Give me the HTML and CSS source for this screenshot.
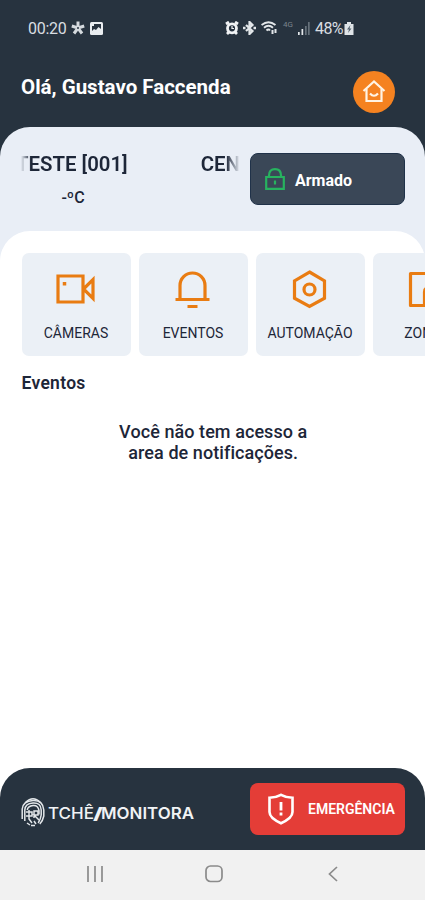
FILE: index.html
```html
<!doctype html>
<html lang="pt-BR">
<head>
  <title>Tchê Monitora</title>
  <meta charset="UTF-8">
  <meta name="viewport" content="width=device-width, initial-scale=1">
  <link rel="stylesheet" href="styles.css">
</head>
<body>
  <div class="statusbar">
    <div class="status-left">
      <span class="clock">00:20</span>
      <svg width="14" height="14" viewBox="0 0 14 14" stroke="#d5dade" stroke-width="3"><path d="M7 7V.5M7 7L.8 5M7 7l6.200-2M7 7l-4 5.500M7 7l4 5.500"/><circle cx="7" cy="7" r="1" fill="#27333f" stroke="none"/></svg>
      <svg width="13" height="13" viewBox="0 0 13 13"><rect width="13" height="13" rx="1.500" fill="#e9edf0"/><path d="M2 2h9v5L8.500 5 6 8 4 7 2 9z" fill="#27333f"/><path d="M2 2h2v2H2z" fill="#e9edf0"/></svg>
    </div>
    <div class="status-right">
      <svg class="alarm" width="14" height="14" viewBox="0 0 14 14" fill="none" stroke="#f1f3f5"><circle cx="7" cy="7.300" r="4.500" stroke-width="2.800"/><path d="M1 3l3-2M13 3l-3-2M2 13l2-2M12 13l-2-2" stroke-width="2.800"/><path d="M7 5v2.500h2" stroke-width="1.200"/></svg>
      <svg width="13" height="14" viewBox="0 0 13 14" fill="none" stroke="#e3e7ea" stroke-width="2.200"><path d="M3 4l6.500 6L6.500 13V1l3 3L3 10"/><path d="M0 7h2.500M10.500 7H13" stroke-width="2.400"/></svg>
      <svg width="17" height="14" viewBox="0 0 17 14" fill="none" stroke="#e3e7ea" stroke-width="1.900"><path d="M.5 4Q7.500-1.500 14.500 4M3 6.700q4.500-3.800 9 0M5.500 9.500Q7.500 7.500 9 9.500"/><path d="M11.500 9v4M14.500 8v4" stroke-width="2"/></svg>
      <span class="net">4G</span>
      <svg width="12" height="13" viewBox="0 0 12 13" fill="#e3e7ea"><path d="M0 10h1.700v3H0zM3.500 7h1.700v6H3.500z"/><path d="M7 4h1.700v9H7zM10 0h1.700v13H10z" fill="#66717b"/></svg>
      <span class="battery">48%</span>
      <svg class="battery-icon" width="10" height="13" viewBox="0 0 10 13"><path d="M3 0h4v2h2.500v11H.5V2H3z" fill="#dfe4e7"/><path d="M6.500 3L3 7.500h2L4 11l3.500-4.500h-2z" fill="#52606c"/></svg>
    </div>
  </div>

  <header class="header">
    <h1>Olá, Gustavo Faccenda</h1>
    <button class="home" aria-label="Início">
      <svg width="24" height="24" viewBox="0 0 24 24" fill="none" stroke="#fff3e4" stroke-width="2.200"><path d="M1.500 11L12 1.500 22.500 11"/><path d="M4.500 9v12h15V9"/><path d="M8 13.500q4 4.500 8 0"/></svg>
    </button>
  </header>

  <main class="site">
    <div class="site-bar">
      <div class="site-info">
        <div class="marquee"><span>TESTE [001]</span><span>CENTRAL</span></div>
        <div class="temp">-ºC</div>
      </div>
      <button class="armed">
        <svg width="20" height="22" viewBox="0 0 20 22" fill="none" stroke="#27b35f" stroke-width="2.200"><path d="M1.200 9h17.600v11.800H1.200z"/><path d="M4 9V7.500Q4 1.200 10 1.200t6 6.300V9"/><path d="M10 12.500v4"/></svg>
        <span>Armado</span>
      </button>
    </div>

    <div class="sheet">
      <nav class="cards">
        <a class="card">
          <svg width="40" height="40" viewBox="0 0 40 40"><path d="M2 7h25v26H2zM27.500 20L37 10.500v19z"/><path d="M8.500 13v3.500" stroke-width="3.500"/></svg>
          <span>CÂMERAS</span>
        </a>
        <a class="card">
          <svg width="40" height="40" viewBox="0 0 40 40"><path d="M7 30V16.500a12.500 12.500 0 0 1 25 0V30M2.500 30.500h34M14.500 37.500h10"/></svg>
          <span>EVENTOS</span>
        </a>
        <a class="card">
          <svg width="40" height="40" viewBox="0 0 40 40"><path d="M19.500 3l15 8.800v17.400l-15 8.300-15-8.300V11.800z"/><circle cx="19.500" cy="20.500" r="5.500"/></svg>
          <span>AUTOMAÇÃO</span>
        </a>
        <a class="card">
          <svg width="40" height="40" viewBox="0 0 40 40" stroke-linejoin="round"><path d="M3.500 4.500h33v32h-10V23q0-4-4-4h-1q-4 0-4 4v13.500h-14z"/></svg>
          <span>ZONAS</span>
        </a>
      </nav>
      <h2>Eventos</h2>
      <p class="empty">Você não tem acesso a<br>area de notificações.</p>
    </div>
  </main>

  <footer class="footer">
    <div class="brand">
      <svg width="24" height="30" viewBox="0 0 24 30" fill="none" stroke="#e3e7ea" stroke-width="1.500"><path d="M4.500 5.500Q12-2 19.500 5.500"/><path d="M1.200 22V12Q2 4 12 3.500T22.800 13v6q-1 5-4 8"/><path d="M3.800 24V13Q4 6.500 12 6t8.200 7v5q-.5 4-3 8"/><path d="M6.200 13Q7 9 12 8.500t6 5v4"/><path d="M5 15h6v4H5M8 13v9l3 4M13 21v-7h4v4h-4l5 5M10 28.500h4M6 26l3 2M13 24l2 3"/></svg>
      <svg width="148" height="24" viewBox="0 0 148 24"><text x="0" y="18.500" textLength="46" lengthAdjust="spacingAndGlyphs">TCHÊ</text><text class="slash" x="45" y="18.500" textLength="10" lengthAdjust="spacingAndGlyphs">/</text><text class="bold" x="53" y="18.500" textLength="93" lengthAdjust="spacingAndGlyphs">MONITORA</text></svg>
    </div>
    <button class="emergency">
      <svg width="26" height="32" viewBox="0 0 26 32" fill="none" stroke="#fff" stroke-width="2.600"><path d="M13 1.800Q18 4.500 24.500 4.800V19q0 6-11.500 11.200Q1.500 25 1.500 19V4.800Q8 4.500 13 1.800z"/><path d="M13 9v8.500M13 19.500v3" stroke-width="2.800"/></svg>
      <span>EMERGÊNCIA</span>
    </button>
  </footer>

  <div class="navbar">
    <svg width="16" height="16" viewBox="0 0 16 16"><path d="M1 0v16M8 0v16M15 0v16"/></svg>
    <svg class="nav-home" width="18" height="18" viewBox="0 0 18 18"><rect x="1" y="1" width="16" height="15.500" rx="4.500"/></svg>
    <svg width="10" height="16" viewBox="0 0 10 16"><path d="M9 1L1.500 8 9 15"/></svg>
  </div>
</body>
</html>
```
FILE: styles.css
```css
* { box-sizing: border-box }
body {
  margin: 0;
  height: 100vh;
  overflow: hidden;
  display: flex;
  flex-direction: column;
  background: linear-gradient(#27333f 200px, #fff 200px);
  color: #1d2638;
  font-family: Roboto, sans-serif
}
h1, h2, p { margin: 0 }
button {
  border: 0;
  padding: 0;
  font-family: inherit;
  color: #fff
}
svg { display: block; flex: none }

.statusbar {
  height: 56px;
  padding: 0 71px 0 28px;
  display: flex;
  align-items: center;
  justify-content: space-between;
  color: #d9dee2;
  font-size: 16px
}
.status-left, .status-right {
  display: flex;
  align-items: center;
  gap: 5px
}
.clock { letter-spacing: -.3px }
.alarm { margin-right: -1px }
.net {
  width: 10px;
  height: 22px;
  font-size: 8px;
  line-height: 16px;
  color: #7a848d
}
.battery {
  width: 29px;
  letter-spacing: -.6px
}
.battery-icon { margin-left: -5px }

.header {
  height: 71px;
  padding: 15px 30px 0 21px;
  display: flex;
  align-items: flex-start;
  justify-content: space-between
}
.header h1 {
  color: #fff;
  font-size: 20.5px;
  line-height: 32px;
  font-weight: 700
}
.home {
  width: 42px;
  height: 42px;
  border-radius: 50%;
  background: #f58220;
  display: grid;
  place-items: center
}

.site {
  flex: 1;
  display: flex;
  flex-direction: column;
  background: linear-gradient(#e9eef6 200px, #fff 200px);
  border-radius: 30px 30px 0 0
}
.site-bar {
  height: 104px;
  padding: 26px 20px 0 21px;
  display: flex;
  justify-content: space-between
}
.site-info { width: 219px }
.marquee {
  display: flex;
  gap: 73px;
  overflow: hidden;
  white-space: nowrap;
  font-size: 20.4px;
  line-height: 22px;
  font-weight: 600;
  -webkit-mask-image: linear-gradient(90deg, transparent, #000 10px, #000 205px, transparent);
  mask-image: linear-gradient(90deg, transparent, #000 10px, #000 205px, transparent)
}
.marquee span:first-child { margin-left: -5px }
.temp {
  width: 104px;
  margin-top: 14px;
  font-size: 16px;
  line-height: 18px;
  font-weight: 500;
  text-align: center
}
.armed {
  width: 155px;
  height: 52px;
  padding-left: 14px;
  display: flex;
  align-items: center;
  gap: 10px;
  background: #3a4757;
  border: 1px solid #203249;
  border-radius: 8px;
  font-size: 16px;
  font-weight: 700
}
.armed span { padding-top: 2px }

.sheet {
  flex: 1;
  padding: 22px 0 0 21.5px;
  background: #fff;
  border-radius: 30px 30px 0 0
}
.cards {
  display: flex;
  gap: 8px;
  overflow: hidden
}
.card {
  flex: none;
  width: 109px;
  height: 103px;
  padding-top: 16px;
  display: flex;
  flex-direction: column;
  align-items: center;
  gap: 15px;
  background: #ebf0f6;
  border-radius: 7px;
  font-size: 14px;
  line-height: 18px
}
.card svg {
  fill: none;
  stroke: #e97c12;
  stroke-width: 3.2
}
.sheet h2 {
  margin-top: 16px;
  font-size: 17.5px;
  letter-spacing: .3px;
  line-height: 22px;
  font-weight: 600
}
.empty {
  margin: 27px 20px 0 0;
  text-align: center;
  font-size: 18px;
  letter-spacing: .07px;
  line-height: 21px;
  font-weight: 500
}

.footer {
  height: 82px;
  padding: 0 20px 0 21px;
  display: flex;
  align-items: center;
  justify-content: space-between;
  background: #27333f;
  border-radius: 30px 30px 0 0
}
.brand {
  margin-top: 6px;
  display: flex;
  align-items: center;
  gap: 3px;
  fill: #f1f3f5;
  font-size: 16px;
  font-family: Inter, sans-serif;
  font-weight: 500
}
.bold { font-weight: 600 }
.slash { font-weight: 800 }
.emergency {
  width: 155px;
  height: 52px;
  padding-left: 18px;
  display: flex;
  align-items: center;
  gap: 14px;
  background: #e43d37;
  border-radius: 8px;
  font-size: 14px;
  font-weight: 600
}

.navbar {
  height: 50px;
  padding: 0 87px 2px;
  display: flex;
  align-items: center;
  justify-content: space-between;
  background: #f1f1f1;
  fill: none;
  stroke: #8b8b8b;
  stroke-width: 1.7
}
.nav-home { margin-left: -3px }
```
